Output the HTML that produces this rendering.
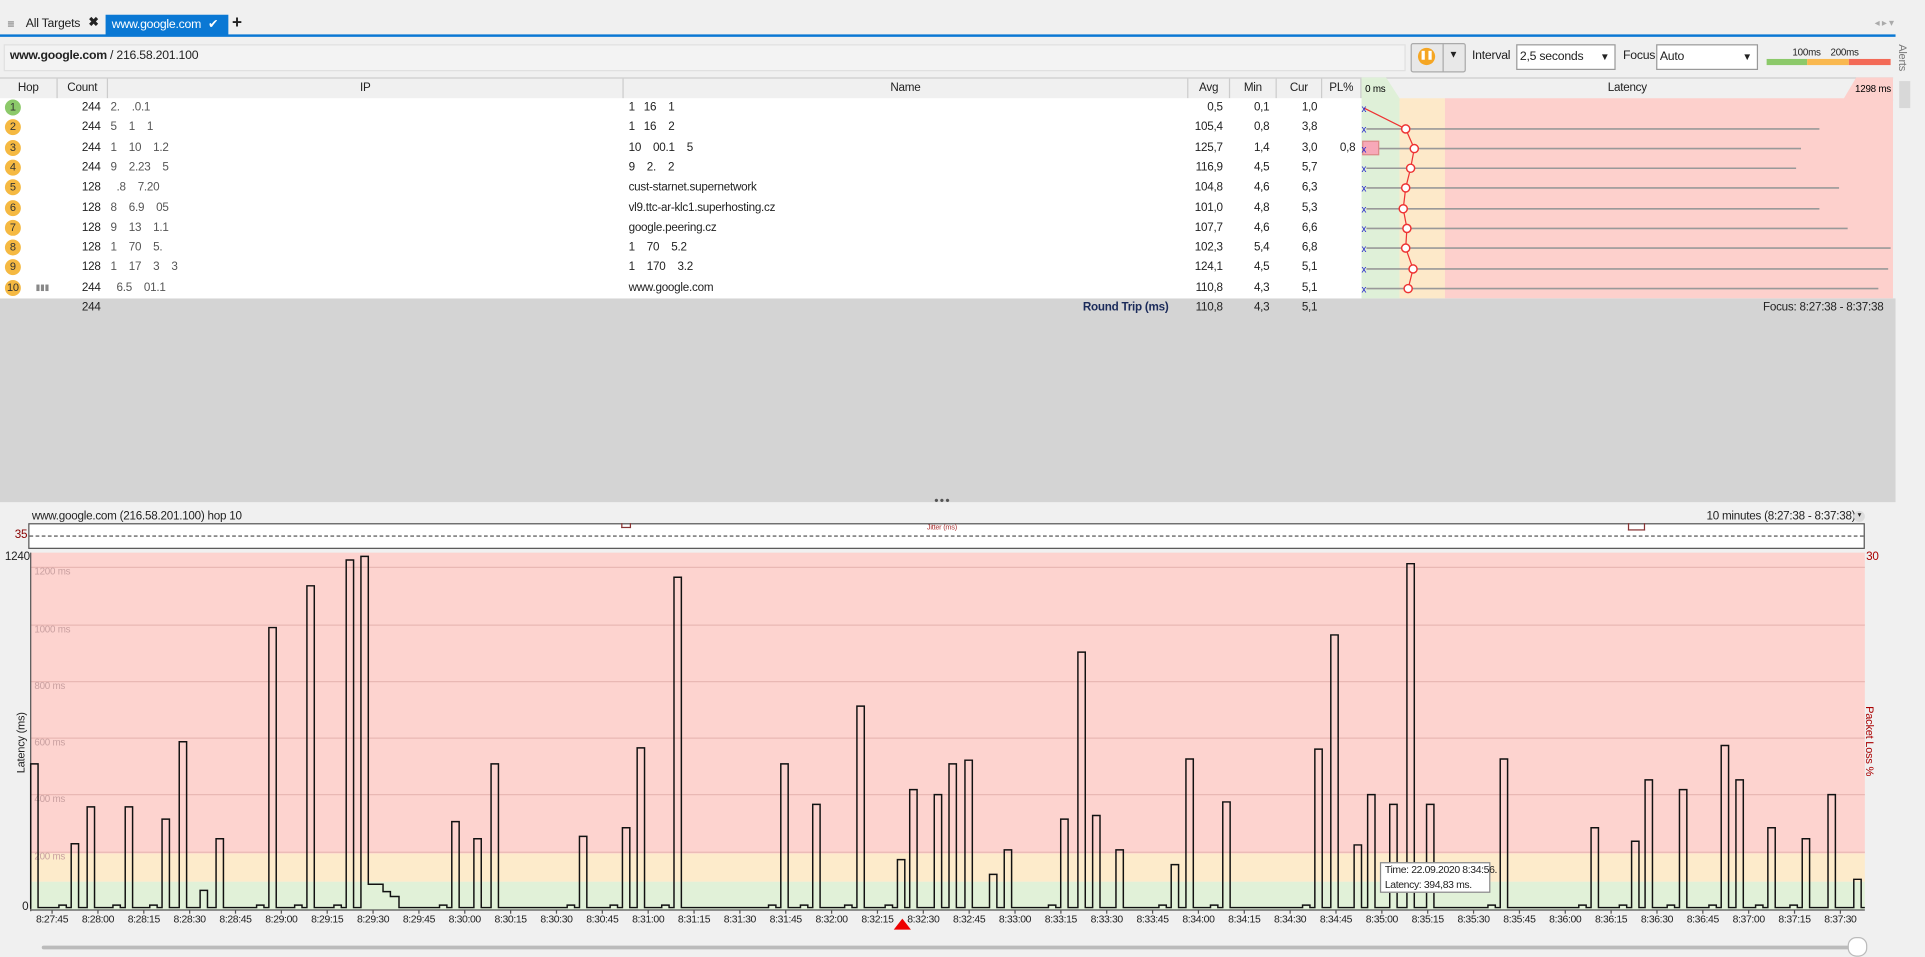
<!DOCTYPE html>
<html><head><meta charset="utf-8">
<style>
html,body{margin:0;padding:0;width:1925px;height:953px;overflow:hidden;background:#f0f0f0}
#w{position:absolute;left:0;top:0;width:1568px;height:776px;transform:scale(1.22768,1.2281);transform-origin:0 0;font-family:"Liberation Sans",sans-serif;font-size:9.5px;letter-spacing:-0.2px;color:#222;background:#f0f0f0}
.a{position:absolute;white-space:pre}
.hdr div{position:absolute;top:0;height:16px;line-height:16px;text-align:center;border-right:1px solid #ccc;box-sizing:border-box}
.row{position:absolute;left:0;width:1109px;height:16.3px;line-height:16px;white-space:pre}
.row span{position:absolute}
.c{position:absolute;left:4px;top:1px;width:13px;height:13px;border-radius:7px;background:#f5b942;font-size:9px;line-height:13px;text-align:center;color:#333}
.r{text-align:right}
</style></head><body><div id="w">
<div class="a" style="left:6px;top:15px;font-size:10px;color:#666">≡</div>
<div class="a" style="left:21px;top:14px;font-size:10px">All Targets</div>
<div class="a" style="left:72px;top:13px;font-size:10px;font-weight:bold">✖</div>
<div class="a" style="left:86px;top:12px;width:100px;height:17px;background:#0a78d4;color:#fff;font-size:10px;line-height:17px;padding-left:5px;box-sizing:border-box">www.google.com <span style="margin-left:3px">✔</span></div>
<div class="a" style="left:189px;top:10px;font-size:14px;font-weight:bold">+</div>
<div class="a" style="left:1527px;top:14px;font-size:8px;color:#aaa">◂ ▸ ▾</div>
<div class="a" style="left:0;top:28px;width:1544px;height:2px;background:#0a78d4"></div>
<div class="a" style="left:3px;top:36px;width:1140px;height:20px;border:1px solid #e0e0e0;background:#f3f3f3"></div>
<div class="a" style="left:8px;top:40px;font-size:10px"><b>www.google.com</b> / 216.58.201.100</div>
<div class="a" style="left:1149px;top:35px;width:43px;height:22px;border:1px solid #aaa;border-radius:2px;background:#e8e8e8"></div>
<div class="a" style="left:1155px;top:39px;width:14px;height:14px;border-radius:7px;background:#f5a623;color:#fff;font-size:7px;line-height:14px;text-align:center;font-weight:bold">❚❚</div>
<div class="a" style="left:1175px;top:35px;width:1px;height:24px;background:#aaa"></div>
<div class="a" style="left:1180px;top:40px;font-size:8px">▼</div>
<div class="a" style="left:1199px;top:40px;font-size:10px">Interval</div>
<div class="a" style="left:1235px;top:36px;width:81px;height:21px;border:1px solid #999;background:#fff;box-sizing:border-box;font-size:10px;line-height:20px;padding-left:2px">2,5 seconds<span style="position:absolute;right:4px;font-size:8px">▼</span></div>
<div class="a" style="left:1322px;top:40px;font-size:10px">Focus</div>
<div class="a" style="left:1349px;top:36px;width:83px;height:21px;border:1px solid #999;background:#fff;box-sizing:border-box;font-size:10px;line-height:20px;padding-left:2px">Auto<span style="position:absolute;right:4px;font-size:8px">▼</span></div>
<div class="a" style="left:1460px;top:38px;font-size:8px">100ms</div>
<div class="a" style="left:1491px;top:38px;font-size:8px">200ms</div>
<div class="a" style="left:1439px;top:48px;width:33px;height:5px;background:#8cc96a"></div>
<div class="a" style="left:1472px;top:48px;width:34px;height:5px;background:#f9b84f"></div>
<div class="a" style="left:1506px;top:48px;width:34px;height:5px;background:#f36a57"></div>
<div class="a" style="left:1544px;top:30px;width:24px;height:380px;background:#f0f0f0"></div>
<div class="a" style="left:1545px;top:36px;font-size:9px;color:#777;writing-mode:vertical-rl">Alerts</div>
<div class="a" style="left:1547px;top:66px;width:9px;height:22px;background:#d8d8d8"></div>
<div class="a" style="left:0;top:243px;width:1544px;height:166px;background:#d4d4d4"></div>
<div class="a hdr" style="left:0;top:63px;width:1542px;height:17px;background:#f0f0f0;border-top:1px solid #ccc;border-bottom:1px solid #ccc">
<div style="left:0;width:47px">Hop</div>
<div style="left:47px;width:41px">Count</div>
<div style="left:88px;width:420px">IP</div>
<div style="left:508px;width:460px">Name</div>
<div style="left:968px;width:34px">Avg</div>
<div style="left:1002px;width:38px">Min</div>
<div style="left:1040px;width:37px">Cur</div>
<div style="left:1077px;width:32px">PL%</div>
<div style="left:1109px;width:433px;border:none">Latency</div>
</div>
<div class="a" style="left:0;top:80px;width:1109px;height:163px;background:#fff"></div>
<svg class="a" style="left:1109px;top:63px" width="433" height="180">
<polygon points="0,0 20,0 31,17 31,180 0,180" fill="#dff0d8"/>
<rect x="31" y="17" width="37" height="163" fill="#fde9c9"/>
<polygon points="68,17 393,17 403,0 433,0 433,180 68,180" fill="#fdd0cc"/>
<text x="3" y="12" font-size="8" font-family="Liberation Sans">0 ms</text>
<text x="402" y="12" font-size="8" font-family="Liberation Sans">1298 ms</text>
<polyline points="2,25 36,42 43,58 40,74 36,90 34,107 37,123 36,139 42,156 38,172" fill="none" stroke="#e33" stroke-width="1"/>
<g stroke="#999" stroke-width="1.3">
<line x1="4" y1="42" x2="373" y2="42"/><line x1="4" y1="58" x2="358" y2="58"/><line x1="4" y1="74" x2="354" y2="74"/><line x1="4" y1="90" x2="389" y2="90"/><line x1="4" y1="107" x2="373" y2="107"/><line x1="4" y1="123" x2="396" y2="123"/><line x1="4" y1="139" x2="431" y2="139"/><line x1="4" y1="156" x2="429" y2="156"/><line x1="4" y1="172" x2="421" y2="172"/>
</g>
<rect x="1" y="52" width="13" height="11" fill="#f7a8b8" stroke="#d88"/>
<g fill="#fff" stroke="#e33" stroke-width="1.2">
<circle cx="36" cy="42" r="3.3"/><circle cx="43" cy="58" r="3.3"/><circle cx="40" cy="74" r="3.3"/><circle cx="36" cy="90" r="3.3"/><circle cx="34" cy="107" r="3.3"/><circle cx="37" cy="123" r="3.3"/><circle cx="36" cy="139" r="3.3"/><circle cx="42" cy="156" r="3.3"/><circle cx="38" cy="172" r="3.3"/>
</g>
<g fill="#22c" font-size="8" font-family="Liberation Sans"><text x="0" y="28">x</text><text x="0" y="45">x</text><text x="0" y="61">x</text><text x="0" y="77">x</text><text x="0" y="93">x</text><text x="0" y="110">x</text><text x="0" y="126">x</text><text x="0" y="142">x</text><text x="0" y="159">x</text><text x="0" y="175">x</text></g>
</svg>
<div id="rows"></div>
<div class="a r" style="left:47px;top:245px;width:35px">244</div>
<div class="a" style="left:882px;top:245px;font-weight:bold;color:#1a2a5a">Round Trip (ms)</div>
<div class="a r" style="left:960px;top:245px;width:36px">110,8</div>
<div class="a r" style="left:1000px;top:245px;width:34px">4,3</div>
<div class="a r" style="left:1040px;top:245px;width:33px">5,1</div>
<div class="a" style="left:1436px;top:245px">Focus: 8:27:38 - 8:37:38</div>
<div class="a" style="left:0;top:409px;width:1568px;height:367px;background:#f0f0f0"></div>
<div class="a" style="left:761px;top:403px;font-size:10px;color:#555;letter-spacing:1px">•••</div>
<div class="a" style="left:26px;top:415px">www.google.com (216.58.201.100) hop 10</div>
<div class="a" style="left:1390px;top:415px">10 minutes (8:27:38 - 8:37:38)</div>
<div class="a" style="left:1510px;top:416px;width:9px;height:9px;border-radius:5px;background:#ddd;font-size:6px;text-align:center;line-height:9px">▾</div>
<div class="a" style="left:23px;top:426px;width:1496px;height:21px;background:#fff;border:1px solid #555;box-sizing:border-box"></div>
<div class="a" style="left:24px;top:436px;width:1494px;border-top:1px dashed #444"></div>
<div class="a" style="left:12px;top:430px;color:#800">35</div>
<div class="a" style="left:755px;top:427px;font-size:6px;color:#a33">Jitter (ms)</div>
<div class="a" style="left:506px;top:426px;width:6px;height:3px;border:1px solid #833;border-top:none"></div>
<div class="a" style="left:1326px;top:426px;width:12px;height:5px;border:1px solid #833;border-top:none"></div>
<div class="a" style="left:4px;top:448px">1240</div>
<div class="a" style="left:1520px;top:448px;color:#a00">30</div>
<div class="a" style="left:18px;top:733px">0</div>
<div class="a" style="left:12px;top:580px;writing-mode:vertical-rl;transform:rotate(180deg);font-size:9px">Latency (ms)</div>
<div class="a" style="left:1518px;top:575px;writing-mode:vertical-rl;font-size:9px;color:#a00">Packet Loss %</div>
<svg class="a" id="ch" style="left:0;top:0" width="1568" height="776"></svg>
<div class="a" style="left:1124px;top:702px;width:90px;height:25px;background:#fff;border:1px solid #888;font-size:8.5px;line-height:11.5px;padding-left:3px;box-sizing:border-box;letter-spacing:-0.3px">Time: 22.09.2020 8:34:56.<br>Latency: 394,83 ms.</div>
<div class="a" style="left:34px;top:770px;width:1480px;height:3px;background:#bbb;border-radius:2px"></div>
<div class="a" style="left:1505px;top:763px;width:14px;height:14px;border-radius:7px;background:#fff;border:1px solid #bbb"></div>
</div>
<script>
var R=[["1","244","2.    .0.1","1   16    1","0,5","0,1","1,0",""],
["2","244","5    1    1","1   16    2","105,4","0,8","3,8",""],
["3","244","1    10    1.2","10    00.1    5","125,7","1,4","3,0","0,8"],
["4","244","9    2.23    5","9    2.    2","116,9","4,5","5,7",""],
["5","128","  .8    7.20","cust-starnet.supernetwork","104,8","4,6","6,3",""],
["6","128","8    6.9    05","vl9.ttc-ar-klc1.superhosting.cz","101,0","4,8","5,3",""],
["7","128","9    13    1.1","google.peering.cz","107,7","4,6","6,6",""],
["8","128","1    70    5.","1    70    5.2","102,3","5,4","6,8",""],
["9","128","1    17    3    3","1    170    3.2","124,1","4,5","5,1",""],
["10","244","  6.5    01.1","www.google.com","110,8","4,3","5,1",""]];
var h="";R.forEach(function(r,i){var t=80+i*16.3;
h+='<div class="row" style="top:'+t+'px"><div class="c" style="'+(i==0?'background:#8cc96a':'')+'">'+r[0]+'</div>'+(i==9?'<span style="left:29px;color:#888;font-size:7px">▮▮▮</span>':'')+
'<span class="r" style="left:47px;width:35px">'+r[1]+'</span><span style="left:90px;color:#555">'+r[2]+'</span><span style="left:512px">'+r[3]+'</span>'+
'<span class="r" style="left:960px;width:36px">'+r[4]+'</span><span class="r" style="left:1000px;width:34px">'+r[5]+'</span><span class="r" style="left:1040px;width:33px">'+r[6]+'</span><span class="r" style="left:1075px;width:29px">'+r[7]+'</span></div>';});
document.getElementById('rows').innerHTML=h;
var s='';
s+='<rect x="25" y="450" width="1494" height="245" fill="#fdd3cf"/><rect x="25" y="695" width="1494" height="23" fill="#fdebcb"/><rect x="25" y="718" width="1494" height="23" fill="#e1f1d8"/>';
[[1200,462],[1000,509],[800,555],[600,601],[400,647],[200,694]].forEach(function(g){s+='<line x1="25" x2="1519" y1="'+g[1]+'" y2="'+g[1]+'" stroke="#e9b8b4"/><text x="28" y="'+(g[1]+6)+'" font-size="8" fill="#c9a0a0" font-family="Liberation Sans">'+g[0]+' ms</text>';});
s+='<line x1="25" y1="450" x2="25" y2="742" stroke="#555"/>';
var sp=[[25,622],[58,687],[71,657],[102,657],[132,667],[146,604],[163,725],[176,683],[219,511],[250,477],[282,456],[294,453],[368,669],[386,683],[400,622],[472,681],[507,674],[519,609],[549,470],[636,622],[662,655],[698,575],[731,700],[741,643],[761,647],[773,622],[786,619],[806,712],[818,692],[864,667],[878,531],[890,664],[909,692],[954,704],[966,618],[996,653],[1071,610],[1084,517],[1103,688],[1114,647],[1132,655],[1146,459],[1162,655],[1222,618],[1296,674],[1329,685],[1340,635],[1368,643],[1402,607],[1414,635],[1440,674],[1468,683],[1489,647],[1510,716]];
var d='M25,740',B=739,last=25;
sp.forEach(function(p){var x=p[0],w=6;
if(x-last>16){d+=' L'+(x-10)+','+B+' L'+(x-10)+','+(B-2)+' L'+(x-4)+','+(B-2)+' L'+(x-4)+','+B;}
d+=' L'+x+','+B+' L'+x+','+p[1]+' L'+(x+w)+','+p[1];
if(x==294){d+=' L300,720 L312,720 L312,726 L318,726 L318,730 L325,730 L325,'+B;last=325;}
else{d+=' L'+(x+w)+','+B;last=x+w;}});
d+=' L1519,'+B;
s+='<path d="'+d+'" fill="none" stroke="#111" stroke-width="1.2"/>';
s+='<line x1="25" x2="1519" y1="741" y2="741" stroke="#555"/>';
for(var i=0;i<40;i++){var x=25+(7+15*i)*2.49;var t=27*60+45+15*i;var m=Math.floor(t/60),sec=t%60;
s+='<line x1="'+x+'" x2="'+x+'" y1="741" y2="744" stroke="#555"/><text x="'+x+'" y="751" font-size="8.5" letter-spacing="-0.3" text-anchor="middle" font-family="Liberation Sans" fill="#222">8:'+m+':'+(sec<10?'0':'')+sec+'</text>';}
s+='<polygon points="735,748 728,757 742,757" fill="#e00"/>';
document.getElementById('ch').innerHTML=s;
</script>
</body></html>
